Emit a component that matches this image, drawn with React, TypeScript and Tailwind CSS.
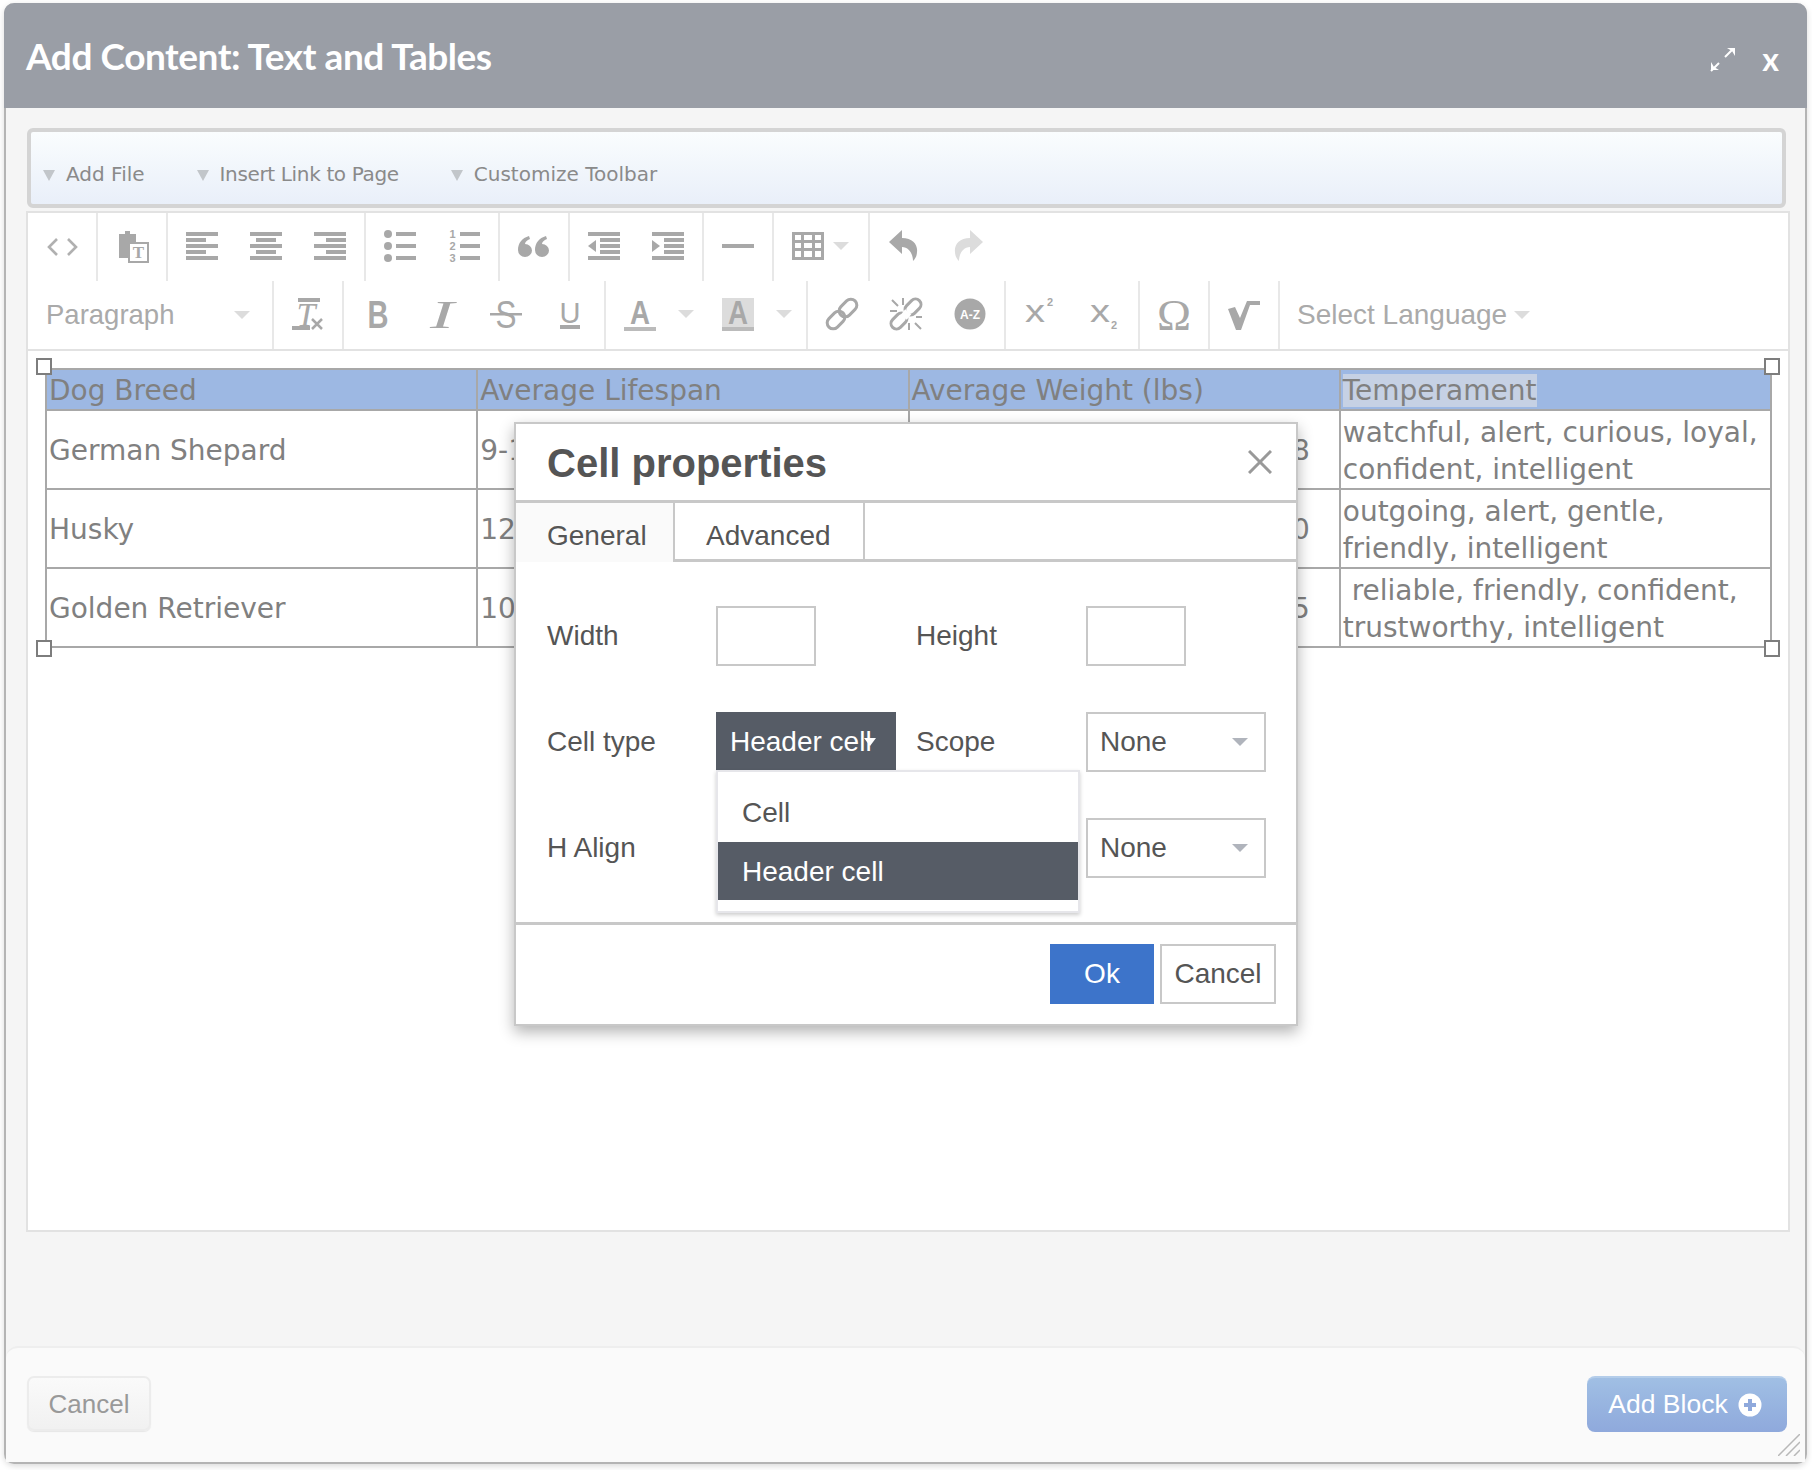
const G = '#a8a8a8';
const L = '#dcdcdc';

function Svg({ children, w = 32 }: { children: React.ReactNode; w?: number }) {
  return (
    <svg width={w} height={32} viewBox={`0 0 ${w} 32`} fill={G} className="overflow-visible block">
      {children}
    </svg>
  );
}

function Bars({ rows }: { rows: [number, number][] }) {
  return (
    <Svg>
      {rows.map(([x, w], i) => (
        <rect key={i} x={x} y={2 + i * 6} width={w} height={4} />
      ))}
    </Svg>
  );
}

function Caret({ className = 'border-t-[#dcdcdc]' }: { className?: string }) {
  return <span className={`block w-0 h-0 border-x-[8px] border-x-transparent border-t-[8px] ${className}`} />;
}

function Btn({ children, w = 64 }: { children: React.ReactNode; w?: number }) {
  return <div className={w === 64 ? 'w-[64px] flex items-center justify-center pb-[2px]' : 'w-[98px] flex items-center pl-[16px] gap-[22px] pb-[2px]'}>{children}</div>;
}

function Group({ children, last }: { children: React.ReactNode; last?: boolean }) {
  return <div className={`flex h-full px-[2px] ${last ? '' : 'border-r-2 border-[#e8e8e8]'}`}>{children}</div>;
}

const serif = { fontFamily: '"Liberation Serif", serif' };
const sans = { fontFamily: '"Liberation Sans", sans-serif' };

function Toolbar() {
  return (
    <div className="border-b-2 border-[#e2e2e2]">
      <div className="flex h-[68px]">
        <Group>
          <Btn>
            <Svg>
              <path d="M11 9 3 17l8 8M22 9l8 8-8 8" fill="none" stroke="#b0b0b0" strokeWidth="2.6" />
            </Svg>
          </Btn>
        </Group>
        <Group>
          <Btn>
            <Svg>
              <path d="M3 4h6V1h5v3h6v8h-8v16H3z" />
              <rect x="13" y="13" width="19" height="19" fill="#fff" stroke={G} strokeWidth="2" />
              <text x="22.5" y="28" textAnchor="middle" fontSize="17" fontWeight="700" style={serif}>T</text>
            </Svg>
          </Btn>
        </Group>
        <Group>
          <Btn><Bars rows={[[0, 32], [0, 20], [0, 32], [0, 20], [0, 32]]} /></Btn>
          <Btn><Bars rows={[[0, 32], [6, 20], [0, 32], [6, 20], [0, 32]]} /></Btn>
          <Btn><Bars rows={[[0, 32], [12, 20], [0, 32], [12, 20], [0, 32]]} /></Btn>
        </Group>
        <Group>
          <Btn>
            <Svg>
              {[4, 16, 28].map(y => (
                <g key={y}>
                  <circle cx="4" cy={y} r="4" />
                  <rect x="12" y={y - 2} width="20" height="4" />
                </g>
              ))}
            </Svg>
          </Btn>
          <Btn>
            <Svg>
              {[4, 16, 28].map((y, i) => (
                <g key={y}>
                  <text x="4.5" y={y + 4} textAnchor="middle" fontSize="11" fontWeight="700" style={sans}>{i + 1}</text>
                  <rect x="12" y={y - 2} width="20" height="4" />
                </g>
              ))}
            </Svg>
          </Btn>
        </Group>
        <Group>
          <Btn>
            <Svg w={34}>
              <path d="M8 27a7 7 0 0 1-7-7C1 13 5 8 12 6l1 3c-3 1-5 3-5 5a7 6.500 0 0 1 0 13z" />
              <path d="M25 27a7 7 0 0 1-7-7c0-7 4-12 11-14l1 3c-3 1-5 3-5 5a7 6.500 0 0 1 0 13z" />
            </Svg>
          </Btn>
        </Group>
        <Group>
          <Btn>
            <Svg>
              <rect y="2" width="32" height="4" />
              <rect x="12" y="8" width="20" height="4" />
              <rect x="12" y="14" width="20" height="4" />
              <rect x="12" y="20" width="20" height="4" />
              <rect y="26" width="32" height="4" />
              <path d="M0 16l8-6v12z" />
            </Svg>
          </Btn>
          <Btn>
            <Svg>
              <rect y="2" width="32" height="4" />
              <rect x="12" y="8" width="20" height="4" />
              <rect x="12" y="14" width="20" height="4" />
              <rect x="12" y="20" width="20" height="4" />
              <rect y="26" width="32" height="4" />
              <path d="M8 16l-8-6v12z" />
            </Svg>
          </Btn>
        </Group>
        <Group>
          <Btn>
            <Svg><rect y="14" width="32" height="4" /></Svg>
          </Btn>
        </Group>
        <Group>
          <div className="w-[90px] flex items-center pl-[16px] gap-[9px] pb-[2px]">
            <Svg>
              <path fillRule="evenodd" d="M0 2h32v28H0zM3 5v5h6V5zm9 0v5h8V5zm11 0v5h6V5zM3 13v5h6v-5zm9 0v5h8v-5zm11 0v5h6v-5zM3 21v6h6v-6zm9 0v6h8v-6zm11 0v6h6v-6z" />
            </Svg>
            <Caret />
          </div>
        </Group>
        <Group last>
          <Btn>
            <Svg>
              <path d="M1 12 14 0v8c11 0 16 7 15 14 0 4-2 7-4 9 0-7-4-14-11-14v7z" />
            </Svg>
          </Btn>
          <Btn>
            <Svg>
              <path fill={L} d="M31 12 18 0v8C7 8 2 15 3 22c0 4 2 7 4 9 0-7 4-14 11-14v7z" />
            </Svg>
          </Btn>
        </Group>
      </div>
      <div className="flex h-[68px]">
        <Group>
          <div className="w-[240px] flex items-center justify-between pl-[16px] pr-[20px] text-[27.500px] text-[#aaaaaa] font-['Liberation_Sans',sans-serif]">
            Paragraph
            <Caret />
          </div>
        </Group>
        <Group>
          <Btn>
            <Svg>
              <rect x="6" width="22" height="4" />
              <rect y="28" width="18" height="4" />
              <text x="14" y="28" textAnchor="middle" fontSize="34" fontStyle="italic" style={serif}>T</text>
              <path d="M20 21l10 10M30 21 20 31" stroke={G} strokeWidth="2.500" fill="none" />
            </Svg>
          </Btn>
        </Group>
        <Group>
          <Btn>
            <Svg>
              <text x="16" y="30" textAnchor="middle" fontSize="39" fontWeight="700" textLength="21" lengthAdjust="spacingAndGlyphs" style={sans}>B</text>
            </Svg>
          </Btn>
          <Btn>
            <Svg>
              <text x="16" y="30" textAnchor="middle" fontSize="40" fontStyle="italic" textLength="24" lengthAdjust="spacingAndGlyphs" style={serif}>I</text>
            </Svg>
          </Btn>
          <Btn>
            <Svg>
              <text x="16" y="30" textAnchor="middle" fontSize="38" textLength="21" lengthAdjust="spacingAndGlyphs" style={sans}>S</text>
              <rect y="15" width="32" height="2.500" />
            </Svg>
          </Btn>
          <Btn>
            <Svg>
              <text x="16" y="25" textAnchor="middle" fontSize="30" textLength="21" lengthAdjust="spacingAndGlyphs" style={sans}>U</text>
              <rect x="6" y="27" width="20" height="4" />
            </Svg>
          </Btn>
        </Group>
        <Group>
          <Btn w={98}>
            <Svg>
              <text x="16" y="26" textAnchor="middle" fontSize="33" fontWeight="700" textLength="20" lengthAdjust="spacingAndGlyphs" style={sans}>A</text>
              <rect y="29" width="32" height="4" fill="#bbbbbb" />
            </Svg>
            <Caret />
          </Btn>
          <Btn w={98}>
            <Svg>
              <rect width="32" height="30" fill="#dcdcdc" />
              <text x="16" y="26" textAnchor="middle" fontSize="33" fontWeight="700" textLength="20" lengthAdjust="spacingAndGlyphs" style={sans}>A</text>
              <rect y="29" width="32" height="4" fill="#bbbbbb" />
            </Svg>
            <Caret />
          </Btn>
        </Group>
        <Group>
          <Btn>
            <Svg>
              <g fill="none" stroke={G} strokeWidth="3">
                <rect x="-10" y="-6" width="20" height="12" rx="6" transform="translate(10 22) rotate(-45)" />
                <rect x="-10" y="-6" width="20" height="12" rx="6" transform="translate(22 10) rotate(-45)" />
              </g>
            </Svg>
          </Btn>
          <Btn>
            <Svg>
              <g fill="none" stroke={G} strokeWidth="3">
                <rect x="-9" y="-5.500" width="18" height="11" rx="5.500" transform="translate(9 23) rotate(-45)" />
                <rect x="-9" y="-5.500" width="18" height="11" rx="5.500" transform="translate(23 9) rotate(-45)" />
                <path d="M13 14l6 5" stroke="#fff" strokeWidth="7" />
                <path d="M13 0v7M0 13h7M2 2l6 6M26 19h6M19 25v7M25 25l6 6" strokeWidth="2" />
              </g>
            </Svg>
          </Btn>
          <Btn>
            <Svg>
              <circle cx="16" cy="16" r="15.500" />
              <text x="16" y="20.500" textAnchor="middle" fontSize="12" fontWeight="700" fill="#fff" style={sans}>A-Z</text>
            </Svg>
          </Btn>
        </Group>
        <Group>
          <Btn>
            <Svg>
              <text x="11" y="24" textAnchor="middle" fontSize="32" textLength="20" lengthAdjust="spacingAndGlyphs" style={sans}>x</text>
              <text x="26" y="8" textAnchor="middle" fontSize="11" fontWeight="700" style={sans}>2</text>
            </Svg>
          </Btn>
          <Btn>
            <Svg>
              <text x="12" y="24" textAnchor="middle" fontSize="32" textLength="20" lengthAdjust="spacingAndGlyphs" style={sans}>x</text>
              <text x="26" y="31" textAnchor="middle" fontSize="11" fontWeight="700" style={sans}>2</text>
            </Svg>
          </Btn>
        </Group>
        <Group>
          <Btn>
            <Svg w={34}>
              <text x="17" y="32" textAnchor="middle" fontSize="44" textLength="34" lengthAdjust="spacingAndGlyphs" style={serif}>Ω</text>
            </Svg>
          </Btn>
        </Group>
        <Group>
          <Btn>
            <Svg>
              <path d="M0 11l7-2 5 11 7-17h13v4H22l-9 25H8z" />
            </Svg>
          </Btn>
        </Group>
        <div className="flex items-center gap-[7px] pl-[17px] text-[28px] text-[#aaaaaa] font-['Liberation_Sans',sans-serif]">
          Select Language
          <Caret />
        </div>
      </div>
    </div>
  );
}

const rows = [
  ['German Shepard', '9-13 years', '50-88', 'watchful, alert, curious, loyal, confident, intelligent'],
  ['Husky', '12-15 years', '35-60', 'outgoing, alert, gentle, friendly, intelligent'],
  ['Golden Retriever', '10-12 years', '55-75', '\u00a0reliable, friendly, confident, trustworthy, intelligent'],
];

function Handle({ className }: { className: string }) {
  return <span className={`absolute w-[16px] h-[17px] bg-white border-2 border-[#7d7d7d] ${className}`} />;
}

function ContentTable() {
  return (
    <div className="relative mt-[17px] mx-[17px]">
      <table className="w-[1727px] table-fixed border-collapse text-[28px] leading-[37px] text-[#808080] font-['DejaVu_Sans',sans-serif]">
        <thead>
          <tr className="bg-[#9db8e3] h-[41px]">
            <th className="border-2 border-[#a8a8a8] px-[2px] pt-[1px] text-left font-normal">Dog Breed</th>
            <th className="border-2 border-[#a8a8a8] px-[2px] pt-[1px] text-left font-normal">Average Lifespan</th>
            <th className="border-2 border-[#a8a8a8] px-[2px] pt-[1px] text-left font-normal">Average Weight (lbs)</th>
            <th className="border-2 border-[#a8a8a8] px-[2px] pt-[1px] text-left font-normal">
              <span className="bg-[#c6d1e4]">Temperament</span>
            </th>
          </tr>
        </thead>
        <tbody>
          {rows.map(r => (
            <tr key={r[0]} className="h-[79px]">
              <td className="border-2 border-[#a8a8a8] px-[2px] pt-[2px]">{r[0]}</td>
              <td className="border-2 border-[#a8a8a8] px-[2px] pt-[2px]">{r[1]}</td>
              <td className="border-2 border-[#a8a8a8] pl-[2px] pr-[29px] pt-[2px] text-right">{r[2]}</td>
              <td className="border-2 border-[#a8a8a8] px-[2px] pt-[2px]">{r[3]}</td>
            </tr>
          ))}
        </tbody>
      </table>
      <Handle className="-left-[9px] -top-[10px]" />
      <Handle className="-right-[9px] -top-[10px]" />
      <Handle className="-left-[9px] -bottom-[9px]" />
      <Handle className="-right-[9px] -bottom-[9px]" />
    </div>
  );
}

function SelectBox() {
  return (
    <div className="w-[180px] h-[60px] border-2 border-[#c8c8c8] flex items-center justify-between pl-[12px] pr-[16px]">
      None
      <Caret className="border-t-[#b0b4bc]" />
    </div>
  );
}

function CellDialog() {
  return (
    <div className="absolute left-[508px] top-[419px] w-[784px] h-[604px] bg-white border-2 border-[#c8c8c8] shadow-[0_6px_14px_rgba(0,0,0,0.3)] flex flex-col text-[28px] text-[#555555] font-['Liberation_Sans',sans-serif]">
      <div className="h-[76px] flex items-center justify-between pl-[31px] pr-[24px]">
        <span className="text-[40px] font-bold mt-[2px]">Cell properties</span>
        <svg className="-mt-[1px]" width="24" height="24" viewBox="0 0 24 24" fill="none" stroke="#999999" strokeWidth="3">
          <path d="M1 1l22 22M23 1 1 23" />
        </svg>
      </div>
      <div className="h-[62px] flex border-y-[3px] border-[#c8c8c8]">
        <div className="w-[159px] -mb-[3px] h-[59px] pl-[31px] pt-[6px] flex items-center bg-[#fafafa] border-r-2 border-[#c8c8c8]">General</div>
        <div className="w-[190px] pl-[31px] pt-[9px] flex items-center border-r-2 border-[#c8c8c8]">Advanced</div>
      </div>
      <div className="relative flex-1 pl-[31px] pt-[44px] flex flex-col gap-[46px]">
        <div className="flex items-center h-[60px]">
          <span className="w-[169px]">Width</span>
          <div className="w-[100px] h-[60px] border-2 border-[#c8c8c8]" />
          <span className="ml-[100px] w-[170px]">Height</span>
          <div className="w-[100px] h-[60px] border-2 border-[#c8c8c8]" />
        </div>
        <div className="flex items-center h-[60px]">
          <span className="w-[169px]">Cell type</span>
          <div className="relative w-[180px] h-[58px] -mt-[2px] pt-[2px] bg-[#565c66] text-white flex items-center pl-[14px]">
            Header cell
            <span className="absolute left-[148px] top-[26px] w-0 h-0 border-x-[6px] border-x-transparent border-t-[8px] border-t-white" />
          </div>
          <span className="ml-[20px] w-[170px]">Scope</span>
          <SelectBox />
        </div>
        <div className="flex items-center h-[60px]">
          <span className="w-[539px]">H Align</span>
          <SelectBox />
        </div>
        <div className="absolute left-[200px] top-[208px] w-[364px] h-[143px] bg-white border-2 border-[#e6e6ea] shadow-[0_2px_4px_rgba(0,0,0,0.2)] pt-[11px]">
          <div className="h-[59px] flex items-center pl-[24px]">Cell</div>
          <div className="h-[58px] pt-[2px] flex items-center pl-[24px] bg-[#565c66] text-white">Header cell</div>
        </div>
      </div>
      <div className="h-[102px] border-t-[3px] border-[#c8c8c8] flex items-center justify-end gap-[6px] pr-[20px] pb-[1px]">
        <div className="w-[104px] h-[60px] bg-[#3d74ca] text-white flex items-center justify-center">Ok</div>
        <div className="w-[116px] h-[60px] border-2 border-[#c8c8c8] flex items-center justify-center">Cancel</div>
      </div>
    </div>
  );
}

function Caret2() {
  return <span className="block w-0 h-0 border-x-[6px] border-x-transparent border-t-[11px] border-t-[#c2c6ca] mt-[3px]" />;
}

export default function App() {
  return (
    <div className="w-[1812px] h-[1470px] bg-white pl-[4px] pt-[3px] overflow-hidden">
      <div className="relative w-[1803px] h-[1461px] flex flex-col bg-[#f5f5f5] rounded-[10px] border-r-2 border-b-2 border-l-2 border-[#b4b4b4] shadow-[0_2px_6px_rgba(0,0,0,0.15)]">
        <div className="h-[105px] -mx-[2px] shrink-0 rounded-t-[10px] bg-[#9a9ea6] flex items-center justify-between pl-[22px] pr-[28px] text-white">
          <h1 className="text-[37px] font-bold tracking-[-0.45px] font-['Lato',sans-serif]">Add Content: Text and Tables</h1>
          <div className="flex items-center gap-[26px] mt-[6px]">
            <svg width="26" height="26" viewBox="0 0 26 26" fill="none" stroke="#fff" strokeWidth="2">
              <path d="M15 11l8-8M1 25l8-8" />
              <path d="M17 2h8v8l-3-5zM9 24H1v-8l3 5z" fill="#fff" stroke="none" />
            </svg>
            <span className="text-[32px] font-bold font-['Lato',sans-serif]">x</span>
          </div>
        </div>
        <div className="flex-1 px-[20px] pt-[20px] flex flex-col min-h-0">
          <div className="ml-[1px] w-[1759px] h-[80px] border-4 border-[#d4d4d4] rounded-[6px] bg-gradient-to-b from-[#fafdfe] to-[#e9eff9] flex items-end pb-[15px] text-[20px] text-[#8a8a8a] font-['DejaVu_Sans',sans-serif]">
            <div className="flex items-center pl-[12px]">
              <Caret2 />
              <span className="ml-[11px]">Add File</span>
              <span className="ml-[52px]"><Caret2 /></span>
              <span className="ml-[11px] tracking-[-0.35px]">Insert Link to Page</span>
              <span className="ml-[52px]"><Caret2 /></span>
              <span className="ml-[11px]">Customize Toolbar</span>
            </div>
          </div>
          <div className="mt-[3px] w-[1764px] h-[1021px] bg-white border-2 border-[#e2e2e2]">
            <Toolbar />
            <ContentTable />
          </div>
        </div>
        <div className="shrink-0 h-[116px] bg-[#fafafa] border-t-2 border-[#eeeeee] rounded-t-[12px] flex items-center justify-between pl-[21px] pr-[18px] pb-[3px] font-['Liberation_Sans',sans-serif]">
          <div className="w-[124px] h-[55px] pt-[2px] rounded-[7px] border-2 border-[#ececec] bg-gradient-to-b from-[#fafafa] to-[#f1f1f1] flex items-center justify-center text-[26px] text-[#999999] shadow-[0_1px_1px_rgba(0,0,0,0.08)]">Cancel</div>
          <div className="w-[200px] h-[56px] pr-[4px] rounded-[8px] bg-gradient-to-b from-[#a0bfe4] to-[#8fa9dc] border-t-2 border-[#b4cdea] flex items-center justify-center gap-[10px] text-[26.500px] text-white">
            Add Block
            <svg width="24" height="24" viewBox="0 0 24 24">
              <circle cx="12" cy="12" r="11.500" fill="#fff" />
              <path d="M12 6v12M6 12h12" stroke="#8fa9dc" strokeWidth="4" />
            </svg>
          </div>
        </div>
        <CellDialog />
        <svg className="absolute right-[5px] bottom-[6px]" width="22" height="22" viewBox="0 0 22 22" stroke="#b8b8b8" strokeWidth="1.500">
          <path d="M0 22 22 0M8 22 22 8M16 22l6-6" />
        </svg>
      </div>
    </div>
  );
}
